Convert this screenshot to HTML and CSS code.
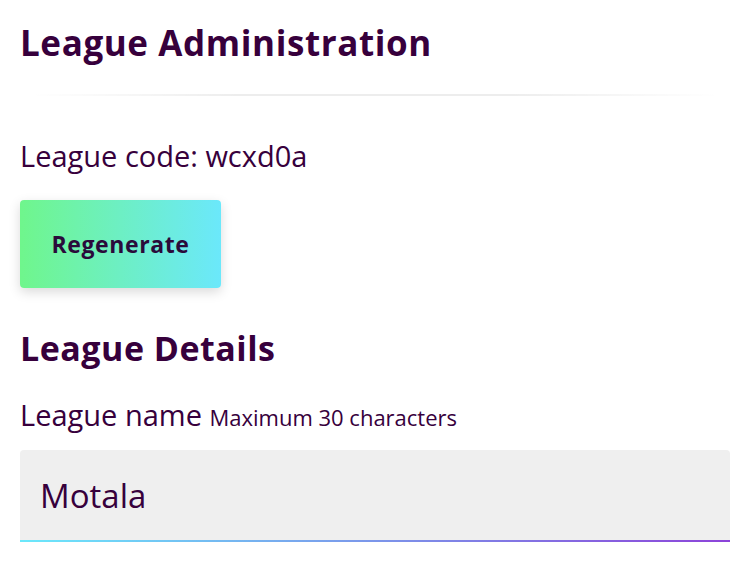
FILE: index.html
```html
<!DOCTYPE html>
<html>
<head>
    <meta charset="utf-8">
    <link rel="stylesheet" href="styles.css">
</head>
<body>
    <div class="league-admin">
        <!-- Administration -->
        <h2 class="section-title">League Administration</h2>
        <div class="divider"></div>

        <p class="league-code">League code: wcxd0a</p>
        <button class="btn-regenerate" type="button">Regenerate</button>

        <!-- Details -->
        <h3 class="section-title details-title">League Details</h3>
        <div class="form-group">
            <label for="leagueName">League name <span class="hint">Maximum 30 characters</span></label>
            <div class="input-wrapper">
                <input type="text" id="leagueName" value="Motala" maxlength="30" />
            </div>
        </div>
    </div>
</body>
</html>
```

FILE: styles.css
```css
body {
    margin: 0;
    background: #fff;
    font-family: "Open Sans", "Noto Sans", sans-serif;
    color: #37003c;
}
.league-admin {
    padding: 23px 20px 0;
}
.section-title {
    margin: 0;
    font-weight: 700;
    font-size: 35px;
    line-height: 40px;
    letter-spacing: 0.6px;
}
.divider {
    height: 2px;
    margin: 31px 10px 0;
    background: linear-gradient(to right, rgba(0,0,0,0), rgba(0,0,0,0.07) 30%, rgba(0,0,0,0.07) 70%, rgba(0,0,0,0));
}
.league-code {
    margin: 43px 0 0;
    font-size: 29px;
    line-height: 34px;
}
.btn-regenerate {
    display: block;
    margin-top: 27px;
    width: 201px;
    height: 88px;
    border: none;
    border-radius: 4px;
    background: linear-gradient(to right, #6ff68c, #6be8fb);
    box-shadow: 0 4px 12px rgba(0,0,0,0.15);
    font-family: inherit;
    font-size: 23px;
    font-weight: 700;
    letter-spacing: 0.6px;
    color: #2a0b3a;
    cursor: pointer;
}
.details-title {
    margin-top: 41px;
    font-size: 34px;
    line-height: 38px;
    letter-spacing: 0.5px;
}
.form-group {
    margin-top: 32px;
}
.form-group label {
    display: block;
    font-size: 29px;
    line-height: 32px;
}
.hint {
    font-size: 22px;
}
.input-wrapper {
    margin-top: 17px;
    width: 710px;
    border-radius: 4px 4px 0 0;
    padding-bottom: 2px;
    background-color: #efefef;
    background-image: linear-gradient(to right, #6be8fb, #8c43d9);
    background-size: 100% 2px;
    background-position: bottom;
    background-repeat: no-repeat;
}
.input-wrapper input {
    display: block;
    width: 100%;
    height: 90px;
    box-sizing: border-box;
    border: none;
    background: transparent;
    padding: 0 20px;
    font-family: inherit;
    font-size: 33px;
    color: #37003c;
    outline: none;
}
```
